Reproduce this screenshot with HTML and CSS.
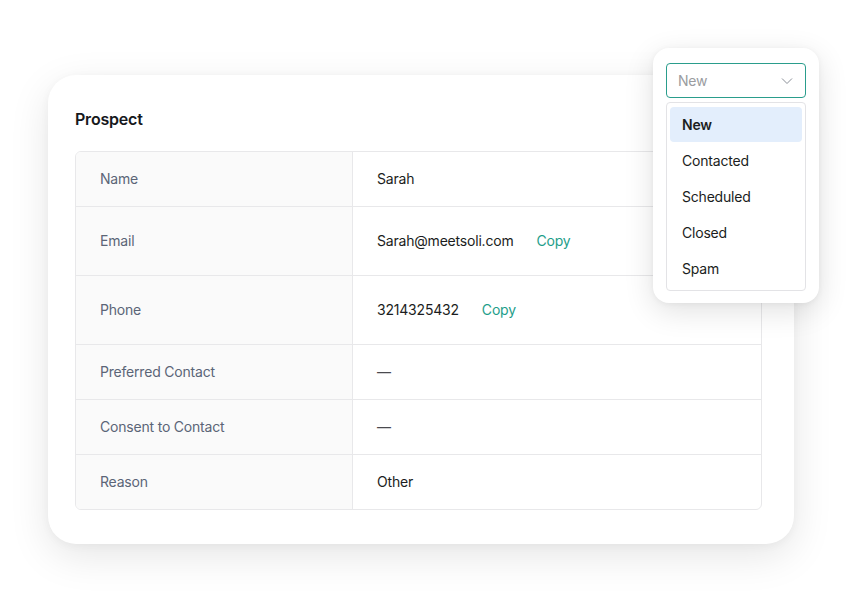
FILE: index.html
```html
<!DOCTYPE html>
<html>
<head>
<meta charset="utf-8">
<link rel="stylesheet" href="styles.css">
</head>
<body>
<div class="page">
  <div class="card">
    <h2 class="title">Prospect</h2>
    <div class="table">
      <div class="row short"><div class="label">Name</div><div class="value">Sarah</div></div>
      <div class="row tall"><div class="label">Email</div><div class="value">Sarah@meetsoli.com<span class="copy">Copy</span></div></div>
      <div class="row tall"><div class="label">Phone</div><div class="value">3214325432<span class="copy">Copy</span></div></div>
      <div class="row short"><div class="label">Preferred Contact</div><div class="value dash">—</div></div>
      <div class="row short"><div class="label">Consent to Contact</div><div class="value dash">—</div></div>
      <div class="row short last"><div class="label">Reason</div><div class="value">Other</div></div>
    </div>
  </div>
  <div class="popover">
    <div class="select">
      <span class="placeholder">New</span>
      <svg class="chev" width="12" height="8" viewBox="0 0 12 8"><path d="M1 1.5 L6 6.5 L11 1.5" fill="none" stroke="#8a8f98" stroke-width="1"/></svg>
    </div>
    <div class="list">
      <div class="opt active">New</div>
      <div class="opt">Contacted</div>
      <div class="opt">Scheduled</div>
      <div class="opt">Closed</div>
      <div class="opt">Spam</div>
    </div>
  </div>
</div>
</body>
</html>
```

FILE: styles.css
```css
* { box-sizing: border-box; }
html, body { margin: 0; padding: 0; background: #ffffff; }
body { font-family: Inter, "Noto Sans", sans-serif; color: #1b1d21; letter-spacing: -0.2px; }
.page { position: relative; width: 867px; height: 592px; padding: 75px 0 0 48px; }
.card {
  width: 746px; height: 469px; background: #fff; border-radius: 28px;
  box-shadow: 0 12px 40px rgba(0,0,0,0.10), 0 2px 10px rgba(0,0,0,0.04);
  padding: 34px 32px 0 27px;
}
.title { margin: 0 0 22px; font-size: 16px; line-height: 20px; font-weight: 600; color: #16181c; }
.table { border: 1px solid #e8e8ea; border-radius: 6px; overflow: hidden; width: 687px; }
.row { display: flex; border-bottom: 1px solid #e8e8ea; }
.row.last { border-bottom: none; }
.row.short { height: 55px; }
.row.tall { height: 69px; }
.row.short.last { height: 54px; }
.label {
  width: 277px; flex: none; background: #fafafa; border-right: 1px solid #e8e8ea;
  display: flex; align-items: center; padding: 0 0 1px 24px;
  font-size: 14px; color: #5b6577;
}
.value { display: flex; align-items: center; padding: 0 0 1px 24px; font-size: 14px; color: #1b1d21; }
.value.dash { color: #4a4a4f; }
.copy { color: #1e9e8a; margin-left: 23px; }
.popover {
  position: absolute; left: 653px; top: 48px; width: 166px; height: 255px;
  background: #fff; border-radius: 16px;
  box-shadow: 0 8px 30px rgba(0,0,0,0.12), 0 1px 6px rgba(0,0,0,0.05);
  padding: 15px 13px 0 13px;
}
.select {
  height: 35px; border: 1px solid #2a9d8c; border-radius: 4px;
  display: flex; align-items: center; justify-content: space-between;
  padding: 0 12px 0 11px;
}
.placeholder { font-size: 14px; color: #9a9ca0; }
.list {
  margin-top: 4px; border: 1px solid #e3e3e6; border-radius: 4px;
  padding: 4px 3px 5px; height: 189px;
}
.opt { height: 36px; display: flex; align-items: center; padding: 0 0 1px 12px; font-size: 14px; color: #1b1d21; border-radius: 4px; }
.opt.active { background: #e3eefc; font-weight: 600; height: 35px; margin-bottom: 1px; }
```
